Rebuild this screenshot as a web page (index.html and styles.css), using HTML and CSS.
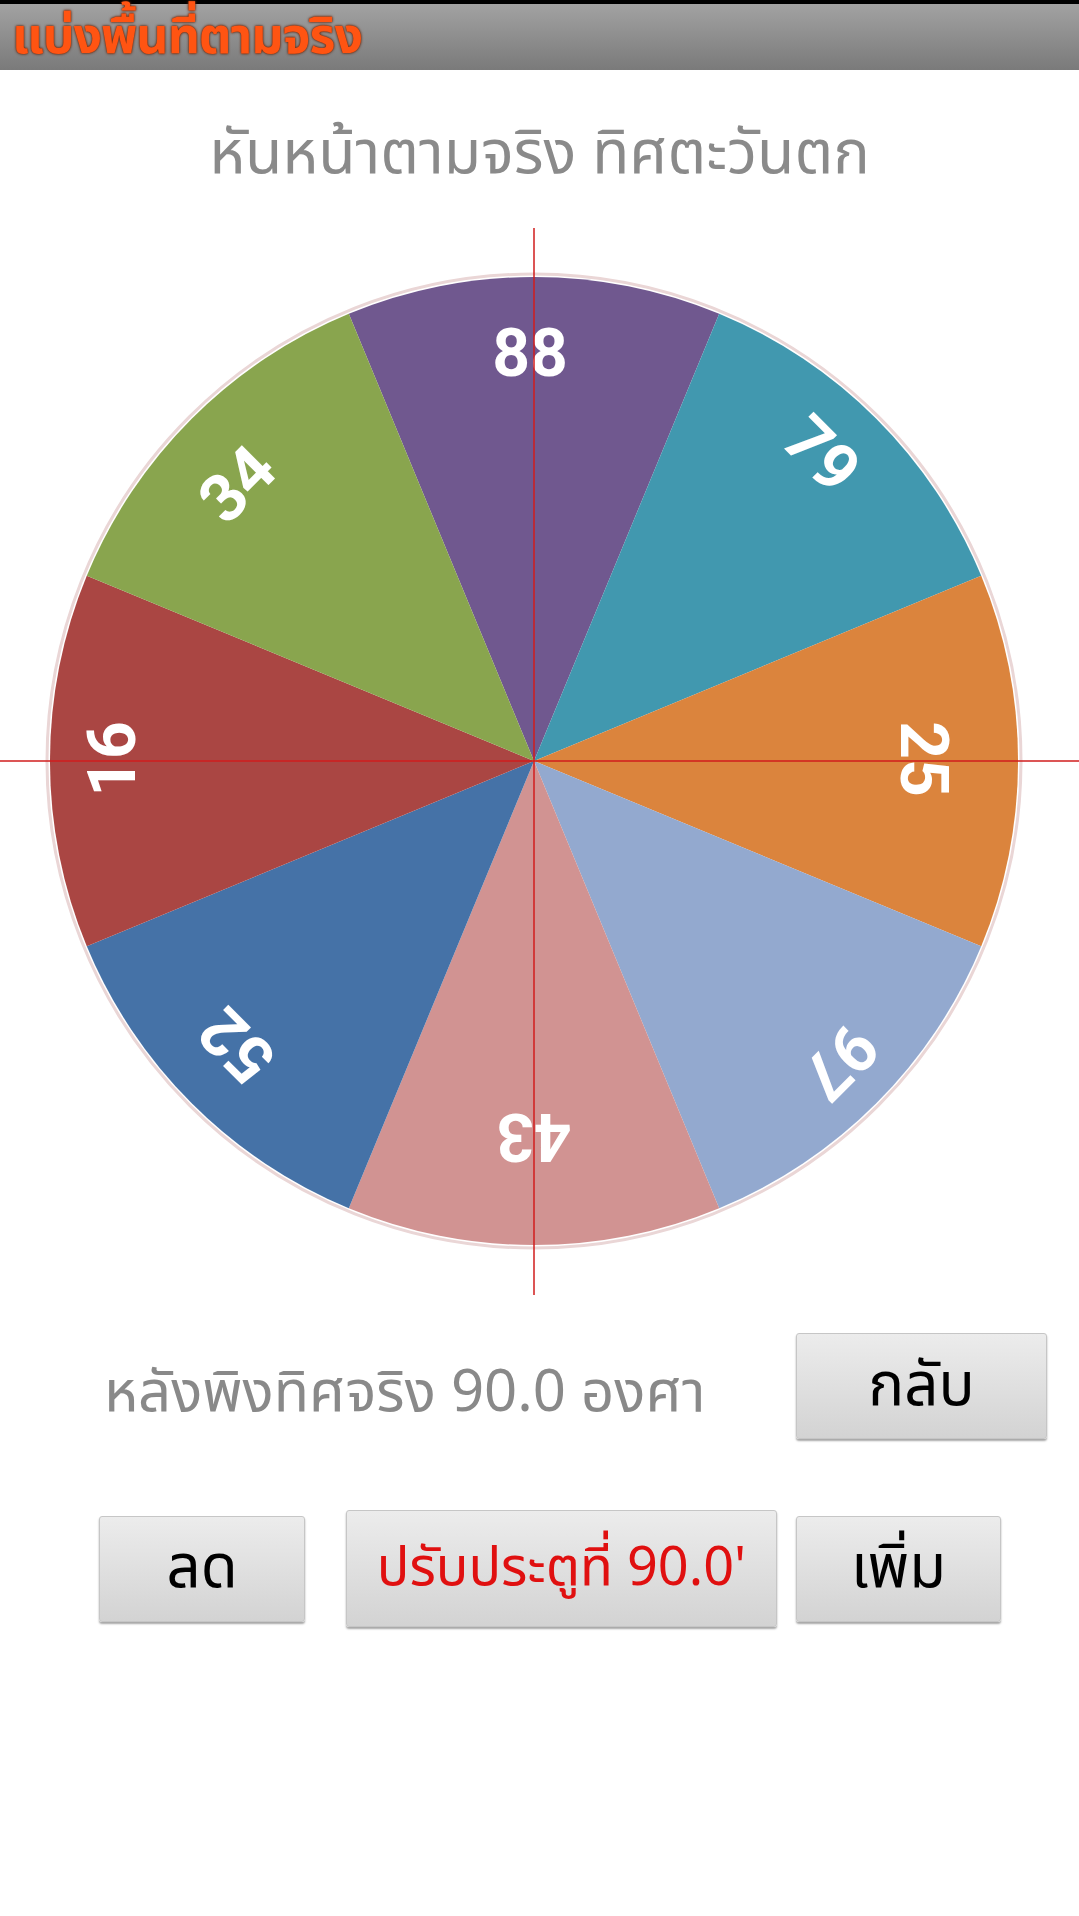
FILE: index.html
```html
<!DOCTYPE html>
<html lang="th">
<head>
    <meta charset="UTF-8">
    <meta name="viewport" content="width=device-width, initial-scale=1.0">
    <title>แบ่งพื้นที่ตามจริง</title>
    <link rel="stylesheet" href="styles.css">
</head>
<body>

    <div class="titlebar">
        <div class="titlebar-text">แบ่งพื้นที่ตามจริง</div>
    </div>

    <div class="facing">หันหน้าตามจริง ทิศตะวันตก</div>

    <svg class="chart" width="1079" height="1100" viewBox="0 0 1079 1100">
        <circle cx="534" cy="561" r="487" fill="none" stroke="#ead6d6" stroke-width="3"/>
        <g class="slices">
            <path fill="#70588f" d="M534 561 L348.8 113.8 A484 484 0 0 1 719.2 113.8 Z"/>
            <path fill="#4198af" d="M534 561 L719.2 113.8 A484 484 0 0 1 981.2 375.8 Z"/>
            <path fill="#db843d" d="M534 561 L981.2 375.8 A484 484 0 0 1 981.2 746.2 Z"/>
            <path fill="#93a9cf" d="M534 561 L981.2 746.2 A484 484 0 0 1 719.2 1008.2 Z"/>
            <path fill="#d19392" d="M534 561 L719.2 1008.2 A484 484 0 0 1 348.8 1008.2 Z"/>
            <path fill="#4572a7" d="M534 561 L348.8 1008.2 A484 484 0 0 1 86.8 746.2 Z"/>
            <path fill="#aa4643" d="M534 561 L86.8 746.2 A484 484 0 0 1 86.8 375.8 Z"/>
            <path fill="#89a54e" d="M534 561 L86.8 375.8 A484 484 0 0 1 348.8 113.8 Z"/>
        </g>
        <g class="labels">
            <text transform="translate(530 153) rotate(0)" dy="0.35em">88</text>
            <text transform="translate(822 254) rotate(45)" dy="0.35em">79</text>
            <text transform="translate(924 559) rotate(90)" dy="0.35em">25</text>
            <text transform="translate(840 862) rotate(135)" dy="0.35em">97</text>
            <text transform="translate(534 937) rotate(180)" dy="0.35em">43</text>
            <text transform="translate(237 846) rotate(225)" dy="0.35em">52</text>
            <text transform="translate(112 559) rotate(270)" dy="0.35em">16</text>
            <text transform="translate(237 284) rotate(315)" dy="0.35em">34</text>
        </g>
        <line class="cross" x1="534" y1="28" x2="534" y2="1095"/>
        <line class="cross" x1="0" y1="561" x2="1079" y2="561"/>
    </svg>

    <div class="info-row">
        <div class="info-text">หลังพิงทิศจริง 90.0 องศา</div>
        <button class="btn btn-back">กลับ</button>
    </div>

    <div class="action-row">
        <button class="btn btn-down">ลด</button>
        <button class="btn btn-door">ปรับประตูที่ 90.0'</button>
        <button class="btn btn-up">เพิ่ม</button>
    </div>

</body>
</html>
```

FILE: styles.css
```css
body {
    margin: 0;
    padding: 0;
    width: 1079px;
    height: 1916px;
    background-color: #ffffff;
    font-family: "Noto Sans Thai", "Noto Sans", Roboto, sans-serif;
    overflow: hidden;
}
.titlebar {
    height: 66px;
    border-top: 4px solid #000000;
    background: linear-gradient(#a2a2a2, #7a7a7a);
    display: flex;
    align-items: center;
    padding-left: 12px;
}
.titlebar-text {
    font-size: 50px;
    font-weight: bold;
    color: #ff5412;
    text-shadow: 0 0 3px #6a2a10, 0 0 2px #6a2a10;
    letter-spacing: -1px;
    margin-top: 2px;
}
.facing {
    height: 130px;
    padding-top: 19px;
    display: flex;
    justify-content: center;
    align-items: center;
    font-size: 61px;
    color: #8a8a8a;
}
.chart {
    display: block;
    margin-top: -19px;
}
.chart .labels text {
    font-family: Roboto, "Noto Sans", sans-serif;
    font-weight: bold;
    font-size: 66px;
    fill: #ffffff;
    text-anchor: middle;
}
.chart .cross {
    stroke: #d01c1c;
    stroke-width: 1.5;
}
.info-row {
    display: flex;
    align-items: center;
    margin-top: 33px;
    padding-left: 104px;
}
.info-text {
    flex: 1;
    font-size: 58px;
    color: #898989;
    padding-top: 14px;
}
.btn {
    font-family: "Noto Sans Thai", "Noto Sans", Roboto, sans-serif;
    font-size: 60px;
    color: #000000;
    background: linear-gradient(#ececec, #d3d3d3);
    border: 1px solid #c6c6c6;
    border-radius: 3px;
    box-shadow: 0 2px 2px rgba(0, 0, 0, 0.35);
    padding: 0;
}
.btn-back {
    width: 251px;
    height: 106px;
    margin-right: 32px;
}
.action-row {
    display: flex;
    align-items: center;
    margin-top: 71px;
    padding-left: 99px;
}
.btn-down {
    width: 206px;
    height: 106px;
}
.btn-door {
    width: 431px;
    height: 117px;
    margin-left: 41px;
    font-size: 54px;
    color: #e01010;
}
.btn-up {
    width: 205px;
    height: 106px;
    margin-left: 19px;
}
```
